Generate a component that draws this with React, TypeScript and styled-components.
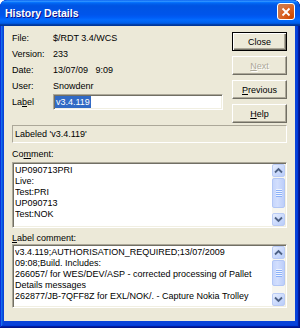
import React from "react";
import styled, { createGlobalStyle } from "styled-components";

const Global = createGlobalStyle`
  html, body { margin: 0; padding: 0; width: 300px; height: 328px; overflow: hidden; background: #ffffff; }
  * { box-sizing: border-box; }
`;

const uiFont = `"Liberation Sans", Arial, sans-serif`;

const Window = styled.div`
  width: 300px;
  height: 328px;
  display: flex;
  flex-direction: column;
  background: #0842d9;
  border-radius: 7px 7px 0 0;
  box-shadow: inset -1px -1px #00138c, inset 1px 1px #0831d9, inset -2px -2px #001ea0,
    inset 2px 2px #166aee, inset -3px -3px #003bda, inset 3px 3px #0855dd;
  font-family: ${uiFont};
  font-size: 9px;
  color: #000;
  overflow: hidden;
`;

const TitleBar = styled.div`
  height: 26px;
  flex: none;
  display: flex;
  align-items: center;
  justify-content: space-between;
  padding: 0 5px 0 5px;
  border-radius: 7px 7px 0 0;
  background: linear-gradient(
    to bottom,
    #0058ee 0%,
    #3593ff 4%,
    #288eff 6%,
    #127dff 8%,
    #036ffc 10%,
    #0262ee 14%,
    #0057e5 20%,
    #0054e3 24%,
    #0055eb 56%,
    #005bf5 66%,
    #026afe 76%,
    #0062ef 86%,
    #0052d6 92%,
    #0040ab 94%,
    #003092 100%
  );
`;

const Title = styled.span`
  color: #fff;
  font-weight: bold;
  font-size: 10.5px;
  text-shadow: 1px 1px #0f1089;
  white-space: nowrap;
`;

const CloseBox = styled.div`
  width: 18px;
  height: 17px;
  align-self: flex-start;
  margin-top: 3px;
  border: 1px solid #fff;
  border-radius: 3px;
  background: radial-gradient(circle at 85% 90%, #cc4600 0%, #dc6527 55%, #cd7546 70%),
    linear-gradient(#e97858, #c2351a);
  display: flex;
  align-items: center;
  justify-content: center;
`;

const Body = styled.div`
  flex: 1;
  margin: 0 5px 7px 4px;
  background: #ece9d8;
  padding: 0 8px;
  display: flex;
  flex-direction: column;
`;

const TopRow = styled.div`
  display: flex;
  justify-content: space-between;
  align-items: flex-start;
`;

const InfoGrid = styled.div`
  display: grid;
  grid-template-columns: 41px 170px;
  grid-auto-rows: 16px;
  align-items: center;
  padding-top: 4px;
`;

const Cell = styled.div`
  line-height: 16px;
  white-space: nowrap;
`;

const Accel = styled.span`
  text-decoration: underline;
`;

const LabelInput = styled.div`
  height: 16px;
  background: #fff;
  border: 1px solid;
  border-color: #aca899 #fff #fff #aca899;
  box-shadow: inset 1px 1px #716f64, inset -1px -1px #f1efe2;
  display: flex;
  align-items: center;
  padding-left: 1px;
`;

const Selected = styled.span`
  background: #316ac5;
  color: #fff;
  line-height: 12px;
  padding: 0 1px;
`;

const ButtonColumn = styled.div`
  display: flex;
  flex-direction: column;
  gap: 5px;
  margin-top: 6px;
  width: 55px;
`;

const DlgButton = styled.div<{ $default?: boolean; $disabled?: boolean }>`
  height: 19px;
  width: 55px;
  display: flex;
  align-items: center;
  justify-content: center;
  background: #ece9d8;
  font-family: ${uiFont};
  font-size: 9px;
  color: ${(p) => (p.$disabled ? "#aca899" : "#000")};
  text-shadow: ${(p) => (p.$disabled ? "1px 1px #fff" : "none")};
  border: 1px solid;
  border-color: ${(p) => (p.$default ? "#000" : "#fff #716f64 #716f64 #fff")};
  box-shadow: ${(p) =>
    p.$default
      ? "inset 1px 1px #fff, inset -1px -1px #716f64, inset -2px -2px #aca899"
      : "inset -1px -1px #aca899"};
`;

const StatusBox = styled.div`
  margin-top: 2px;
  height: 18px;
  border: 1px solid;
  border-color: #aca899 #fff #fff #aca899;
  padding-left: 2px;
  line-height: 16px;
  white-space: nowrap;
`;

const FieldLabel = styled.div<{ $top: number }>`
  margin-top: ${(p) => p.$top}px;
  line-height: 12px;
  height: 12px;
  white-space: nowrap;
`;

const TextBox = styled.div<{ $top: number; $height: number }>`
  margin-top: ${(p) => p.$top}px;
  height: ${(p) => p.$height}px;
  background: #fff;
  border: 1px solid;
  border-color: #aca899 #fff #fff #aca899;
  box-shadow: inset 1px 1px #716f64, inset -1px -1px #f1efe2;
  padding: 1px;
  display: flex;
`;

const Lines = styled.div`
  flex: 1;
  padding: 1px 1px 0 1px;
  line-height: 11px;
  overflow: hidden;
`;

const Line = styled.div`
  white-space: nowrap;
  overflow: hidden;
`;

const ScrollBar = styled.div`
  width: 13px;
  display: flex;
  flex-direction: column;
  background: #f7f6f0;
`;

const ScrollButton = styled.div`
  width: 13px;
  height: 13px;
  flex: none;
  border: 1px solid #bacbf5;
  border-radius: 2px;
  background: linear-gradient(135deg, #e8effd 0%, #cddbfc 50%, #b9cdf9 100%);
  display: flex;
  align-items: center;
  justify-content: center;
`;

const Track = styled.div`
  flex: 1;
  padding: 1px 0;
  display: flex;
  flex-direction: column;
`;

const Thumb = styled.div<{ $height: number }>`
  height: ${(p) => p.$height}px;
  border: 1px solid #b2c6f5;
  border-radius: 2px;
  background: linear-gradient(90deg, #c6d6fc 0%, #d2defd 40%, #bccefa 100%);
  display: flex;
  align-items: center;
  justify-content: center;
`;

const Arrow = ({ dir }: { dir: "up" | "down" }) => (
  <svg width="9" height="7" viewBox="0 0 9 7">
    <polyline
      points={dir === "up" ? "1,5.5 4.5,2 8,5.5" : "1,1.5 4.5,5 8,1.5"}
      fill="none"
      stroke="#4d6185"
      strokeWidth="1.8"
    />
  </svg>
);

const Grip = () => (
  <svg width="6" height="8" viewBox="0 0 6 8">
    {[0, 2, 4, 6].map((y) => (
      <g key={y}>
        <rect x="0" y={y} width="6" height="1" fill="#eef4fe" />
        <rect x="0" y={y + 1} width="6" height="1" fill="#8cb0f8" />
      </g>
    ))}
  </svg>
);

const VScroll = ({ thumb }: { thumb: number }) => (
  <ScrollBar>
    <ScrollButton>
      <Arrow dir="up" />
    </ScrollButton>
    <Track>
      <Thumb $height={thumb}>
        <Grip />
      </Thumb>
    </Track>
    <ScrollButton>
      <Arrow dir="down" />
    </ScrollButton>
  </ScrollBar>
);

const info: [string, string][] = [
  ["File:", "$/RDT 3.4/WCS"],
  ["Version:", "233"],
  ["Date:", "13/07/09   9:09"],
  ["User:", "Snowdenr"],
];

const comment = ["UP090713PRI", "Live:", "Test:PRI", "UP090713", "Test:NOK"];

const labelComment = [
  "v3.4.119;AUTHORISATION_REQUIRED;13/07/2009",
  "09:08;Build. Includes:",
  "266057/ for WES/DEV/ASP - corrected processing of Pallet",
  "Details messages",
  "262877/JB-7QFF8Z for EXL/NOK/. - Capture Nokia Trolley",
];

export default function App() {
  return (
    <>
      <Global />
      <Window>
        <TitleBar>
          <Title>History Details</Title>
          <CloseBox>
            <svg width="10" height="10" viewBox="0 0 10 10">
              <path d="M1.5 1.5 L8.5 8.5 M8.5 1.5 L1.5 8.5" stroke="#fff" strokeWidth="1.8" />
            </svg>
          </CloseBox>
        </TitleBar>
        <Body>
          <TopRow>
            <InfoGrid>
              {info.map(([k, v]) => (
                <React.Fragment key={k}>
                  <Cell>{k}</Cell>
                  <Cell style={{ whiteSpace: "pre" }}>{v}</Cell>
                </React.Fragment>
              ))}
              <Cell>
                La<Accel>b</Accel>el
              </Cell>
              <LabelInput>
                <Selected>v3.4.119</Selected>
              </LabelInput>
            </InfoGrid>
            <ButtonColumn>
              <DlgButton $default>Close</DlgButton>
              <DlgButton $disabled>
                <Accel>N</Accel>ext
              </DlgButton>
              <DlgButton>
                <Accel>P</Accel>revious
              </DlgButton>
              <DlgButton>
                <Accel>H</Accel>elp
              </DlgButton>
            </ButtonColumn>
          </TopRow>
          <StatusBox>Labeled 'v3.4.119'</StatusBox>
          <FieldLabel $top={5}>
            Co<Accel>m</Accel>ment:
          </FieldLabel>
          <TextBox $top={2} $height={66}>
            <Lines>
              {comment.map((l, i) => (
                <Line key={i}>{l}</Line>
              ))}
            </Lines>
            <VScroll thumb={30} />
          </TextBox>
          <FieldLabel $top={4}>
            <Accel>L</Accel>abel comment:
          </FieldLabel>
          <TextBox $top={0} $height={64}>
            <Lines>
              {labelComment.map((l, i) => (
                <Line key={i}>{l}</Line>
              ))}
            </Lines>
            <VScroll thumb={26} />
          </TextBox>
        </Body>
      </Window>
    </>
  );
}
